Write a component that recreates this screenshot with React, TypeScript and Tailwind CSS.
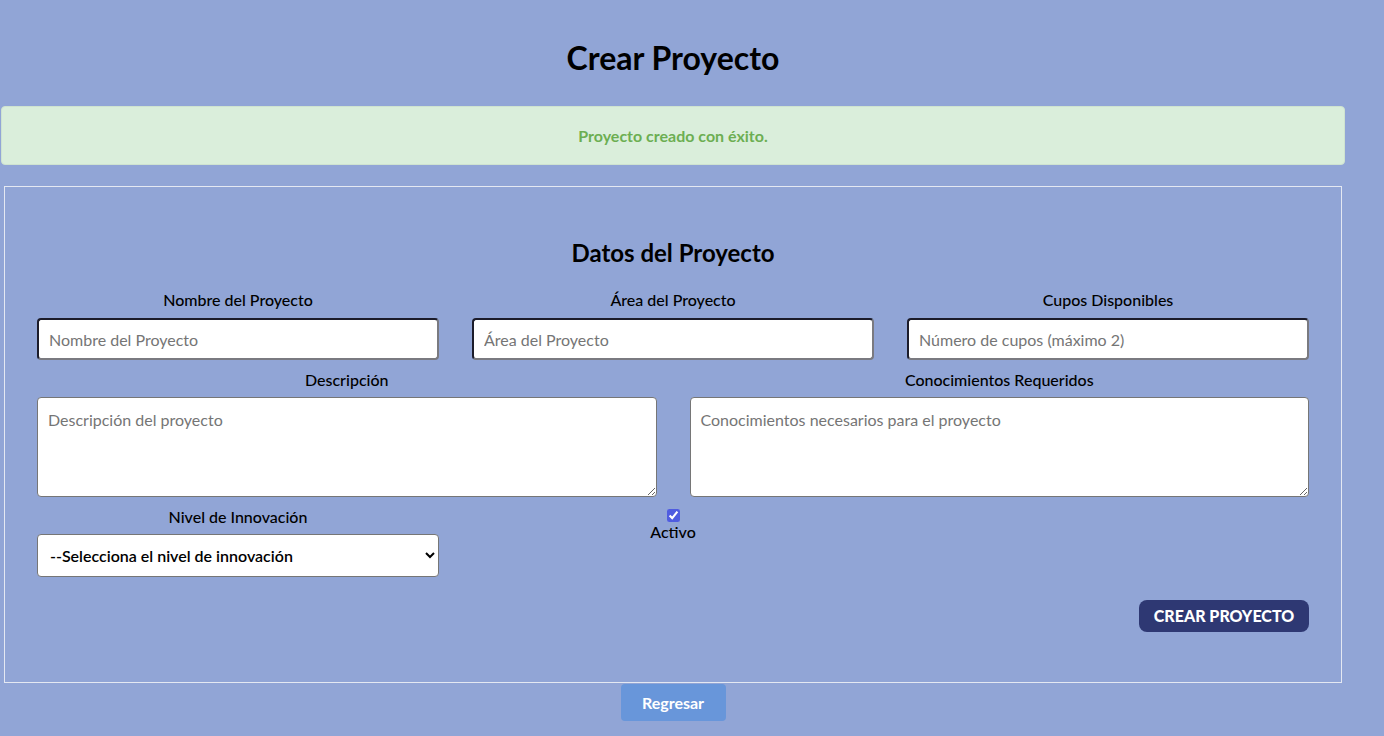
import React from "react";

const font = { fontFamily: "Lato, 'Open Sans', sans-serif" };

const inputCls =
  "h-[42px] w-full rounded-[4px] border-2 border-t-[#1c1c2a] border-l-[#1c1c2a] border-r-[#7a7a80] border-b-[#7a7a80] bg-white px-2.5 text-[16px] text-black outline-none placeholder:text-[#757575]";

const areaCls =
  "h-[100px] w-full resize-y rounded-[4px] border border-[#767676] bg-white px-2.5 py-2.5 text-[16px] text-black outline-none placeholder:text-[#757575]";

const labelCls = "text-center text-[16px] leading-6 font-medium text-black";

function Field({ label, children }: { label: string; children: React.ReactNode }) {
  return (
    <div className="flex flex-col">
      <label className={`mb-[6px] ${labelCls}`}>{label}</label>
      {children}
    </div>
  );
}

export default function App() {
  return (
    <div className="min-h-screen bg-[#91a5d6] pb-4" style={font}>
      <div className="w-[1346px]">
        <h1 className="pt-[38px] text-center text-[32px] leading-10 font-bold text-black">
          Crear Proyecto
        </h1>

        <div className="ml-px mt-[28px] flex h-[59px] w-[1344px] items-center justify-center rounded-[4px] border border-[#cfe3d0] bg-[#daeedb]">
          <p className="text-[16px] font-bold text-[#6cae52]">Proyecto creado con éxito.</p>
        </div>

        <form className="ml-1 mt-[21px] w-[1338px] border border-[#e4e8f2] px-[32px] pt-[50px] pb-[50px]">
          <h2 className="h-8 text-center text-[24px] leading-8 font-bold text-black">
            Datos del Proyecto
          </h2>

          <div className="mt-[19px] grid grid-cols-3 gap-x-[33px]">
            <Field label="Nombre del Proyecto">
              <input className={inputCls} placeholder="Nombre del Proyecto" />
            </Field>
            <Field label="Área del Proyecto">
              <input className={inputCls} placeholder="Área del Proyecto" />
            </Field>
            <Field label="Cupos Disponibles">
              <input className={inputCls} placeholder="Número de cupos (máximo 2)" />
            </Field>
          </div>

          <div className="mt-[8px] grid grid-cols-2 gap-x-[33px]">
            <div className="flex flex-col">
              <label className={`mb-[5px] ${labelCls}`}>Descripción</label>
              <textarea className={areaCls} placeholder="Descripción del proyecto" />
            </div>
            <div className="flex flex-col">
              <label className={`mb-[5px] ${labelCls}`}>Conocimientos Requeridos</label>
              <textarea className={areaCls} placeholder="Conocimientos necesarios para el proyecto" />
            </div>
          </div>

          <div className="mt-[8px] grid grid-cols-3 gap-x-[33px]">
            <div className="flex flex-col">
              <label className={`mb-[5px] ${labelCls}`}>Nivel de Innovación</label>
              <select className="h-[43px] w-full rounded-[4px] border border-[#767676] bg-white px-2 text-[16px] font-semibold text-black outline-none">
                <option>--Selecciona el nivel de innovación</option>
                <option>Bajo</option>
                <option>Medio</option>
                <option>Alto</option>
              </select>
            </div>
            <div className="flex flex-col items-center pt-[4px]">
              <input
                type="checkbox"
                defaultChecked
                className="h-[13px] w-[13px] accent-[#4f5ce0]"
              />
              <span className="text-[16px] leading-5 font-medium text-black">Activo</span>
            </div>
          </div>

          <div className="mt-[23px] flex justify-end">
            <button
              type="button"
              className="h-8 w-[170px] rounded-lg bg-[#2e3873] text-[16px] font-black text-white"
            >
              CREAR PROYECTO
            </button>
          </div>
        </form>

        <div className="flex justify-center">
          <button
            type="button"
            className="mt-px h-[37px] w-[105px] rounded-[4px] bg-[#6896da] text-[16px] font-bold text-white"
          >
            Regresar
          </button>
        </div>
      </div>
    </div>
  );
}
